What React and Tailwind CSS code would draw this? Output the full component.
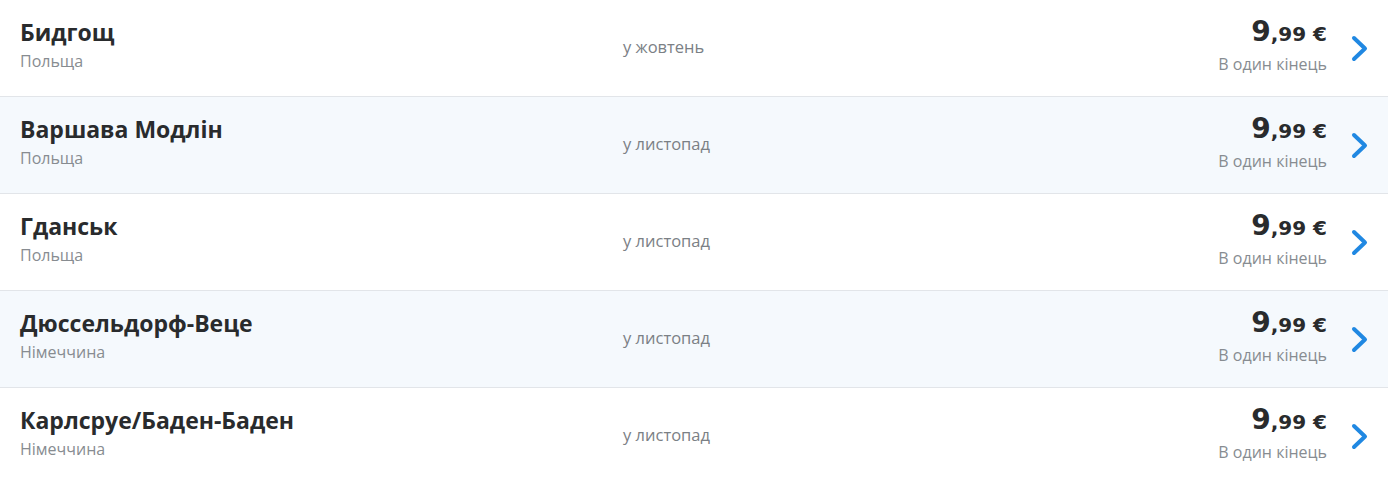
import React from "react";

const rows = [
  { city: "Бидгощ", country: "Польща", month: "у жовтень" },
  { city: "Варшава Модлін", country: "Польща", month: "у листопад" },
  { city: "Гданськ", country: "Польща", month: "у листопад" },
  { city: "Дюссельдорф-Веце", country: "Німеччина", month: "у листопад" },
  { city: "Карлсруе/Баден-Баден", country: "Німеччина", month: "у листопад" },
];

function Chevron() {
  return (
    <svg width="18" height="28" viewBox="0 0 18 28" className="block">
      <path d="M3 3 L14 13.5 L3 24" fill="none" stroke="#2088e2" strokeWidth="4" strokeLinecap="round" strokeLinejoin="round" />
    </svg>
  );
}

export default function App() {
  return (
    <div className="w-[1388px] bg-white" style={{ fontFamily: "'Open Sans', 'Noto Sans', sans-serif" }}>
      {rows.map((r, i) => (
        <div
          key={i}
          className={`flex h-[97px] border-b border-[#e2e5e9] ${i % 2 === 1 ? "bg-[#f5f9fd]" : "bg-white"}`}
        >
          <div className="w-[623px] pl-5 pt-[17px]">
            <div className="text-[23px] leading-[30px] font-bold text-[#292b2d]">{r.city}</div>
            <div className="mt-[4px] text-[16px] leading-[21px] text-[#878c91]">{r.country}</div>
          </div>
          <div className="flex-1 pt-[36px] text-[16.5px] leading-[22px] text-[#7b8085]">{r.month}</div>
          <div className="flex flex-col items-end pt-[15px]">
            <div
              className="flex items-baseline font-bold text-[#292b2d]"
              style={{ fontFamily: "'DejaVu Sans', sans-serif" }}
            >
              <span className="text-[28px] leading-[34px]">9</span>
              <span className="text-[20px] leading-[34px]">,99 €</span>
            </div>
            <div className="mt-[2px] text-[16px] leading-[22px] text-[#878c91]">В один кінець</div>
          </div>
          <div className="w-[61px] pl-[24px] pt-[35px]">
            <Chevron />
          </div>
        </div>
      ))}
    </div>
  );
}
